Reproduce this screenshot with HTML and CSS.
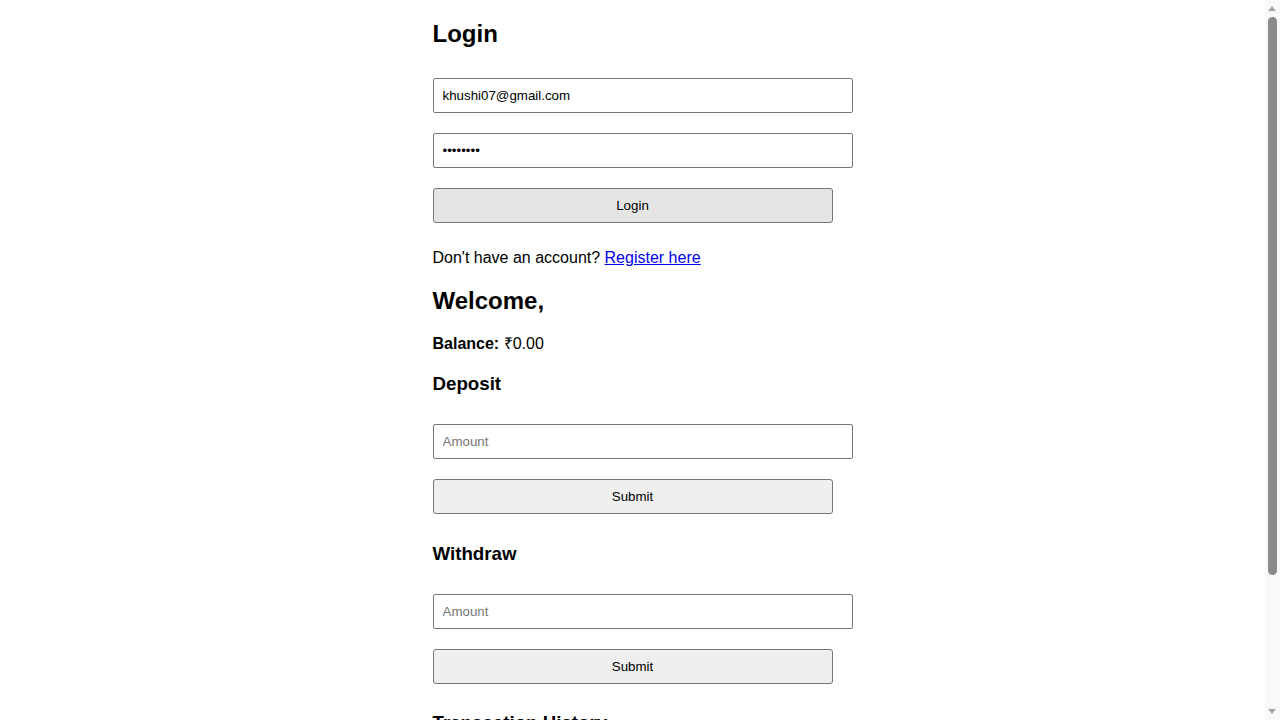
FILE: index.html
```html
<!DOCTYPE html>
<html lang="en">
<head>
<meta charset="utf-8">
<title>Bank App</title>
<link rel="stylesheet" href="styles.css">
</head>
<body>
<div class="container">
  <section class="auth">
    <h2>Login</h2>
    <form class="stack">
      <input class="field" type="email" value="khushi07@gmail.com">
      <input class="field" type="password" value="khushi07">
      <button type="button" class="btn btn-hover">Login</button>
    </form>
    <p>Don't have an account? <a href="#">Register here</a></p>
  </section>

  <section class="dashboard">
    <h2>Welcome, </h2>
    <p class="balance"><strong>Balance:</strong> ₹0.00</p>

    <h3>Deposit</h3>
    <form class="stack">
      <input class="field" type="number" placeholder="Amount">
      <button type="button" class="btn">Submit</button>
    </form>

    <h3>Withdraw</h3>
    <form class="stack">
      <input class="field" type="number" placeholder="Amount">
      <button type="button" class="btn">Submit</button>
    </form>

    <h3 class="history-title">Transaction History</h3>
    <ul class="history">
      <li>No transactions yet</li>
    </ul>
  </section>
</div>

<div class="scrollbar" aria-hidden="true">
  <span class="arrow arrow-up"></span>
  <span class="thumb"></span>
  <span class="arrow arrow-down"></span>
</div>
</body>
</html>
```

FILE: styles.css
```css
html, body {
  background: #ffffff;
}

html {
  overflow: hidden;
}

body {
  margin: 0 23px 0 8px;
  padding: 0;
  font-family: "Liberation Sans", Arial, sans-serif;
  color: #000000;
}

.container {
  max-width: 400px;
  margin: 0 auto;
}

h2 {
  font-size: 24px;
  font-weight: bold;
  margin: 19.92px 0;
}

h3 {
  font-size: 18.72px;
  font-weight: bold;
  margin: 18.72px 0;
}

p {
  font-size: 16px;
  margin: 16px 0;
}

.balance {
  line-height: 18px;
  padding-bottom: 2px;
}

a {
  color: #0000ee;
  text-decoration: underline;
}

.stack {
  display: flex;
  flex-direction: column;
  align-items: flex-start;
  gap: 20px;
  padding: 10px 0;
  margin: 0;
}

.field {
  display: block;
  width: 100%;
  height: 33px;
  padding: 0 9px;
  border: 1px solid #767676;
  border-radius: 2px;
  font-family: "Liberation Sans", Arial, sans-serif;
  font-size: 13.333px;
  color: #000000;
  background: #ffffff;
  outline: none;
  -moz-appearance: textfield;
}

.field::-webkit-outer-spin-button,
.field::-webkit-inner-spin-button {
  -webkit-appearance: none;
  margin: 0;
}

.field::placeholder {
  color: #757575;
}

.btn {
  box-sizing: border-box;
  width: 100%;
  height: 35px;
  padding: 0 6px;
  border: 1px solid #767676;
  border-radius: 3px;
  background: #efefef;
  font-family: "Liberation Sans", Arial, sans-serif;
  font-size: 13.333px;
  color: #000000;
}

.btn-hover {
  background: #e5e5e5;
}

.history {
  margin: 16px 0;
  padding-left: 40px;
  min-height: 120px;
}

/* simulated browser scrollbar overlay */
.scrollbar {
  position: fixed;
  top: 0;
  right: 0;
  width: 15px;
  height: 100%;
  background: #f9f9f9;
}

.thumb {
  position: absolute;
  left: 3px;
  top: 17px;
  width: 9px;
  height: 558px;
  border-radius: 5px;
  background: #8a8a8a;
}

.arrow {
  position: absolute;
  left: 3px;
  width: 0;
  height: 0;
  border-left: 4.5px solid transparent;
  border-right: 4.5px solid transparent;
}

.arrow-up {
  top: 6px;
  border-bottom: 5px solid #a3a3a3;
}

.arrow-down {
  bottom: 6px;
  border-top: 5px solid #a3a3a3;
}
```
